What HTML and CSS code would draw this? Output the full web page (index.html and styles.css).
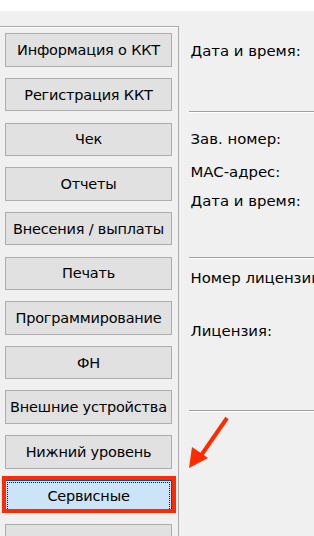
FILE: index.html
```html
<!DOCTYPE html>
<html lang="ru">
<head>
<meta charset="utf-8">
<link rel="stylesheet" href="styles.css">
</head>
<body>
<div class="topstrip"></div>
<div class="window">
  <div class="sidebar">
    <div class="btn">Информация о ККТ</div>
    <div class="btn">Регистрация ККТ</div>
    <div class="btn">Чек</div>
    <div class="btn">Отчеты</div>
    <div class="btn">Внесения / выплаты</div>
    <div class="btn">Печать</div>
    <div class="btn">Программирование</div>
    <div class="btn">ФН</div>
    <div class="btn">Внешние устройства</div>
    <div class="btn">Нижний уровень</div>
    <div class="btn selected">Сервисные</div>
    <div class="btn">Параметры</div>
  </div>
  <div class="content">
    <div class="group g1">
      <div class="label">Дата и время:</div>
    </div>
    <div class="sep"></div>
    <div class="group g2">
      <div class="label l-zav">Зав. номер:</div>
      <div class="label l-mac">MAC-адрес:</div>
      <div class="label l-dt">Дата и время:</div>
    </div>
    <div class="sep"></div>
    <div class="group g3">
      <div class="label l-num">Номер лицензии:</div>
      <div class="label l-lic">Лицензия:</div>
    </div>
    <div class="sep"></div>
  </div>
  <svg class="arrow" width="50" height="70" viewBox="0 0 50 70">
    <line x1="42" y1="8" x2="15" y2="47" stroke="#ff2a00" stroke-width="4" stroke-linecap="butt"/>
    <polygon points="4,58 7,37 23,48" fill="#ff2a00"/>
  </svg>
</div>
</body>
</html>
```

FILE: styles.css
```css
html, body {
  margin: 0;
  padding: 0;
}
body {
  width: 314px;
  height: 536px;
  overflow: hidden;
  background: #f0f0f0;
  font-family: "DejaVu Sans", Verdana, sans-serif;
  font-size: 14.5px;
  color: #000;
}
.topstrip {
  height: 11px;
  background: #fff;
}
.window {
  position: relative;
  display: flex;
  align-items: flex-start;
  height: 525px;
}
.sidebar {
  margin-top: 15px;
  width: 179px;
  height: 520px;
  border-top: 1px solid #a9a9a9;
  border-right: 1px solid #a9a9a9;
  box-shadow: inset 0 1px 0 #fff;
  padding-top: 6.3px;
  box-sizing: border-box;
  display: flex;
  flex-direction: column;
  gap: 11.15px;
  padding-left: 5px;
  flex: none;
}
.btn {
  position: relative;
  flex: none;
  width: 167px;
  height: 33.5px;
  box-sizing: border-box;
  border: 1px solid #adadad;
  background: #e1e1e1;
  display: flex;
  align-items: center;
  justify-content: center;
  white-space: nowrap;
  line-height: 18px;
  letter-spacing: -0.2px;
}
.btn.selected {
  background: #cce4f7;
  border-color: #005499;
}
.btn.selected::before {
  content: "";
  position: absolute;
  inset: 1px;
  border: 1px dotted #1a1a1a;
}
.btn.selected::after {
  content: "";
  position: absolute;
  left: -4px;
  right: -5px;
  top: -5px;
  bottom: -1px;
  border: 4px solid #ff2a00;
}
.content {
  flex: 1;
  padding-left: 10px;
  display: flex;
  flex-direction: column;
  min-width: 0;
}
.group {
  padding-left: 1.5px;
}
.label {
  font-size: 14.9px;
  line-height: 18px;
  white-space: nowrap;
}
.g1 {
  padding-top: 31px;
  height: 100px;
  box-sizing: border-box;
}
.sep {
  border-top: 1px solid #a0a0a0;
  border-bottom: 1px solid #fff;
  height: 0;
}
.g2 {
  height: 144px;
  box-sizing: border-box;
  padding-top: 17px;
}
.l-mac { margin-top: 15px; }
.l-dt { margin-top: 10.5px; }
.g3 {
  height: 151px;
  box-sizing: border-box;
  padding-top: 9.5px;
}
.l-lic { margin-top: 35.5px; }
.arrow {
  position: absolute;
  left: 185px;
  top: 399px;
}
```
